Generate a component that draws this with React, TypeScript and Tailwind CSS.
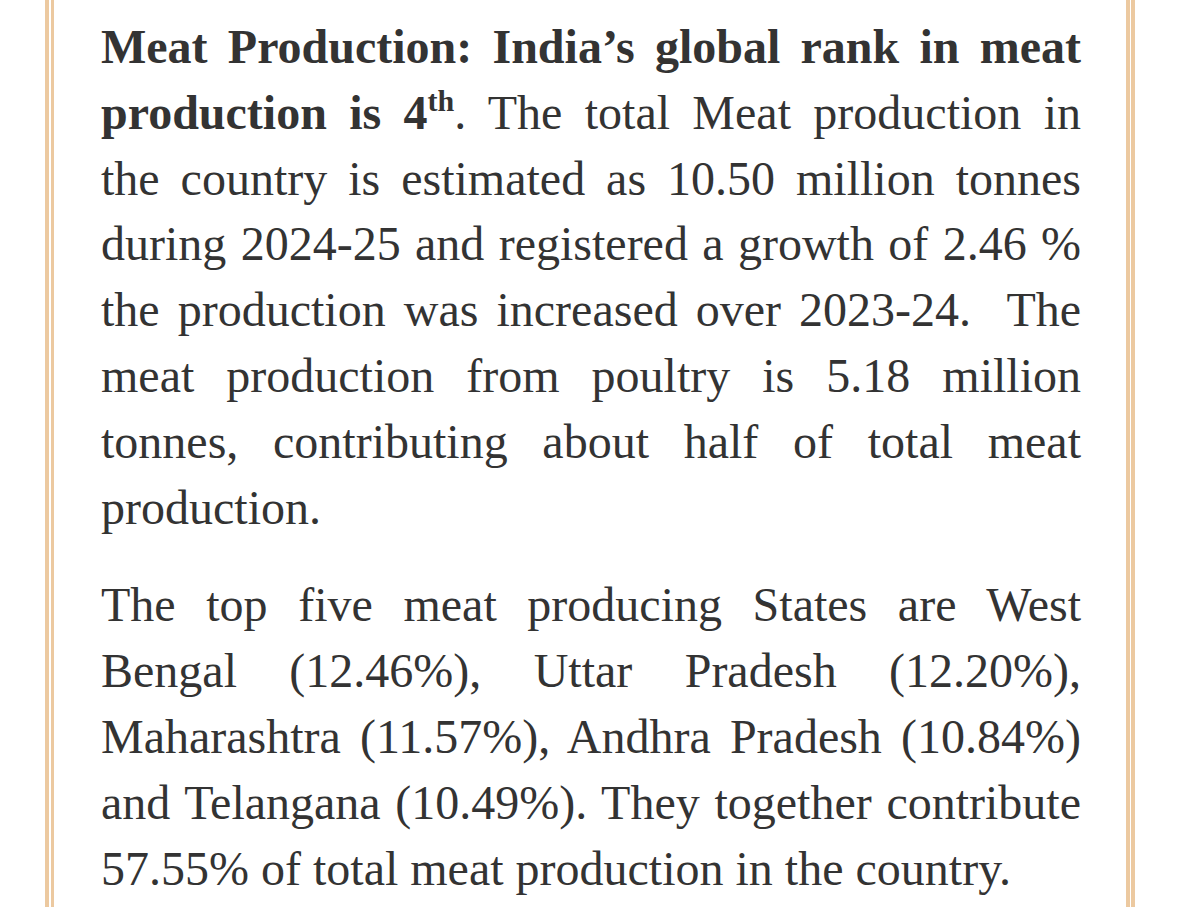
import React from "react";

const J = "block [text-align-last:justify]";

export default function App() {
  return (
    <div className="flex w-full h-[907px] bg-white overflow-hidden">
      <div className="w-[45px] shrink-0" />
      <div className="w-[4px] shrink-0 bg-[#ecc9a0]" />
      <div className="w-[1.5px] shrink-0" />
      <div className="w-[3.5px] shrink-0 bg-[#ecc9a0]" />
      <main
        className="w-[1072px] shrink-0 pl-[47px] pr-[45px] pt-[14px] text-[48px] leading-[65.8px] text-[#333333] text-justify"
        style={{ fontFamily: '"Liberation Serif", "Times New Roman", serif' }}
      >
        <p>
          <span className={`${J} font-bold`}>Meat Production: India’s global rank in meat</span>
          <span className={J}>
            <span className="font-bold">
              production is 4
              <span className="relative top-[-18px] text-[30px] leading-none">th</span>
            </span>
            . The total Meat production in
          </span>
          <span className={J}>the country is estimated as 10.50 million tonnes</span>
          <span className={J}>during 2024-25 and registered a growth of 2.46 %</span>
          <span className={J}>the production was increased over 2023-24.&nbsp; The</span>
          <span className={J}>meat production from poultry is 5.18 million</span>
          <span className={J}>tonnes, contributing about half of total meat</span>
          <span className="block text-left">production.</span>
        </p>
        <p className="mt-[32px]">
          <span className={J}>The top five meat producing States are West</span>
          <span className={J}>Bengal (12.46%), Uttar Pradesh (12.20%),</span>
          <span className={J}>Maharashtra (11.57%), Andhra Pradesh (10.84%)</span>
          <span className={J}>and Telangana (10.49%). They together contribute</span>
          <span className="block text-left">57.55% of total meat production in the country.</span>
        </p>
      </main>
      <div className="w-[3.5px] shrink-0 bg-[#ecc9a0]" />
      <div className="w-[1.5px] shrink-0" />
      <div className="w-[3.5px] shrink-0 bg-[#ecc9a0]" />
      <div className="flex-1" />
    </div>
  );
}
